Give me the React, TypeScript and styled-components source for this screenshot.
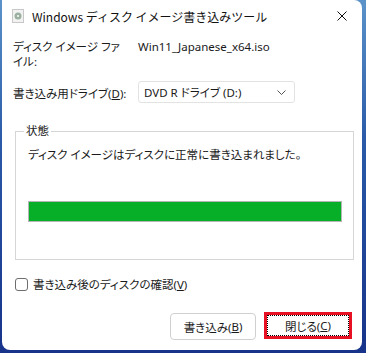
import React from 'react';
import styled, { createGlobalStyle } from 'styled-components';

const GlobalStyle = createGlobalStyle`
  html, body {
    margin: 0;
    padding: 0;
    width: 366px;
    height: 353px;
    overflow: hidden;
    background: linear-gradient(180deg, #5b93c9 0%, #2a5aa8 40%, #17338a 100%);
    font-family: "Noto Sans", "Noto Sans CJK JP", sans-serif;
    font-feature-settings: "palt";
  }
`;

const Desktop = styled.div`
  width: 366px;
  height: 353px;
  padding: 0 4px 3px 2px;
  box-sizing: border-box;
`;

const Window = styled.div`
  width: 360px;
  height: 350px;
  background: #fff;
  border-radius: 0 8px 8px 8px;
  display: flex;
  flex-direction: column;
  color: #1a1a1a;
  font-size: 11.5px;
`;

const TitleBar = styled.div`
  height: 32px;
  display: flex;
  align-items: center;
  padding: 0 10px 0 10px;
  gap: 8px;
`;

const Title = styled.div`
  flex: 1;
  font-family: "Noto Sans CJK JP", sans-serif;
  font-size: 12px;
  color: #111;
  font-feature-settings: normal;
`;

const Close = styled.div`
  width: 20px;
  display: flex;
  justify-content: center;
`;

const Body = styled.div`
  flex: 1;
  display: flex;
  flex-direction: column;
  padding: 7px 10px 10px 11px;
`;

const Row = styled.div<{ $mt?: number }>`
  display: grid;
  grid-template-columns: 125px 1fr;
  align-items: start;
  margin-top: ${(p) => p.$mt ?? 0}px;
`;

const Label = styled.div<{ $nowrap?: boolean }>`
  line-height: 15px;
  width: 116px;
  white-space: ${(p) => (p.$nowrap ? 'nowrap' : 'normal')};
  line-break: anywhere;
`;

const Value = styled.div`
  line-height: 15px;
`;

const Select = styled.div`
  width: 157px;
  height: 22px;
  box-sizing: border-box;
  border: 1px solid #e3e3e3;
  border-radius: 3px;
  display: flex;
  align-items: center;
  justify-content: space-between;
  padding: 0 8px 0 5px;
  margin-top: -5px;
`;

const Group = styled.fieldset`
  margin: 21px 0 0 2px;
  padding: 9px 11px 0 12px;
  border: 1px solid #d6d6d6;
  height: 136px;
  box-sizing: border-box;
  width: 339px;
  legend {
    padding: 0 2px;
    margin-left: -4px;
    line-height: 14px;
  }
`;

const Status = styled.div`
  line-height: 15px;
`;

const Progress = styled.div`
  margin-top: 39px;
  height: 21px;
  box-sizing: border-box;
  border: 1px solid #b5b5b5;
  background: #06af27;
`;

const CheckRow = styled.label`
  display: flex;
  align-items: center;
  gap: 5px;
  margin-top: 16px;
  margin-left: 2px;
`;

const Box = styled.span`
  width: 13px;
  height: 13px;
  box-sizing: border-box;
  border: 1px solid #6e6e6e;
  border-radius: 3px;
`;

const Buttons = styled.div`
  display: flex;
  justify-content: flex-end;
  gap: 8px;
  margin-top: auto;
`;

const Button = styled.div<{ $focused?: boolean }>`
  height: 27px;
  box-sizing: border-box;
  display: flex;
  align-items: center;
  justify-content: center;
  ${(p) =>
    p.$focused
      ? `
    width: 88px;
    border: 3px solid #e81123;
    outline: 1px dotted #000;
    outline-offset: -4px;
  `
      : `
    width: 86px;
    border: 1px solid #d0d0d0;
    border-radius: 4px;
    margin-top: 1px;
  `}
`;

const U = styled.span`
  text-decoration: underline;
`;

const DiscIcon = () => (
  <svg width="12" height="14" viewBox="0 0 12 14">
    <rect x="0.5" y="0.5" width="11" height="13" fill="#f2f2f2" stroke="#c8c8c8" />
    <circle cx="6" cy="7" r="3.5" fill="#9bb0a0" />
    <circle cx="6" cy="7" r="1" fill="#fff" />
  </svg>
);

const CloseIcon = () => (
  <svg width="10" height="10" viewBox="0 0 10 10">
    <path d="M0.5 0.5 L9.5 9.5 M9.5 0.5 L0.5 9.5" stroke="#111" strokeWidth="1" />
  </svg>
);

const Chevron = () => (
  <svg width="9" height="5" viewBox="0 0 9 5">
    <path d="M0.5 0.5 L4.5 4.5 L8.5 0.5" fill="none" stroke="#555" strokeWidth="1" />
  </svg>
);

export default function App() {
  return (
    <>
      <GlobalStyle />
      <Desktop>
        <Window>
          <TitleBar>
            <DiscIcon />
            <Title>Windows ディスク イメージ書き込みツール</Title>
            <Close>
              <CloseIcon />
            </Close>
          </TitleBar>
          <Body>
            <Row>
              <Label>ディスク イメージ ファイル:</Label>
              <Value>Win11_Japanese_x64.iso</Value>
            </Row>
            <Row $mt={17}>
              <Label $nowrap>
                書き込み用ドライブ(<U>D</U>):
              </Label>
              <Select>
                <span>DVD R ドライブ (D:)</span>
                <Chevron />
              </Select>
            </Row>
            <Group>
              <legend>状態</legend>
              <Status>ディスク イメージはディスクに正常に書き込まれました。</Status>
              <Progress />
            </Group>
            <CheckRow>
              <Box />
              <span>
                書き込み後のディスクの確認(<U>V</U>)
              </span>
            </CheckRow>
            <Buttons>
              <Button>
                書き込み(<U>B</U>)
              </Button>
              <Button $focused>
                閉じる(<U>C</U>)
              </Button>
            </Buttons>
          </Body>
        </Window>
      </Desktop>
    </>
  );
}
